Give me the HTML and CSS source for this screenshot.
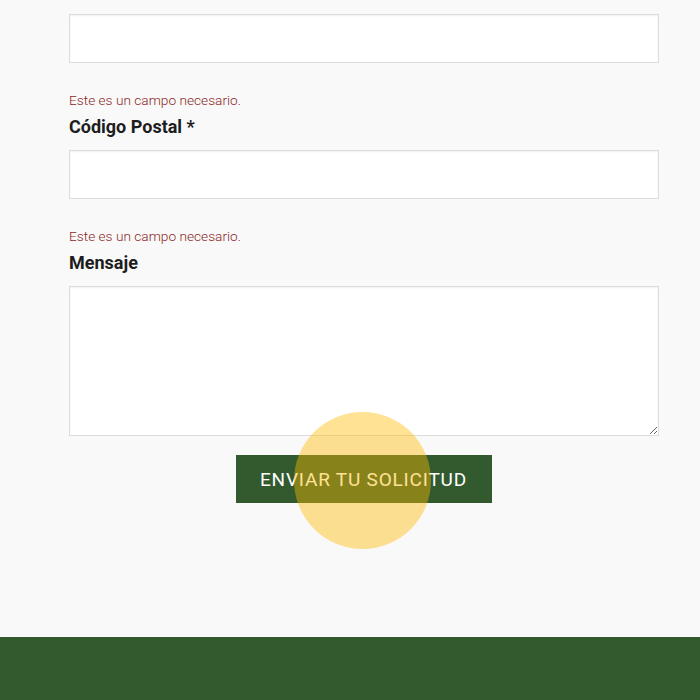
FILE: index.html
```html
<!DOCTYPE html>
<html lang="es">
<head>
<meta charset="utf-8">
<link rel="stylesheet" href="styles.css">
</head>
<body>
<main class="page">
  <form class="form">
    <input class="field" type="text">
    <p class="error">Este es un campo necesario.</p>
    <label class="label">Código Postal *</label>
    <input class="field" type="text">
    <p class="error">Este es un campo necesario.</p>
    <label class="label">Mensaje</label>
    <textarea class="field area"></textarea>
    <div class="actions">
      <div class="btn-wrap">
        <button class="btn" type="button">ENVIAR TU SOLICITUD</button>
        <span class="click"></span>
      </div>
    </div>
  </form>
</main>
<footer class="footer"></footer>
</body>
</html>
```

FILE: styles.css
```css
* { box-sizing: border-box; }
html, body { margin: 0; padding: 0; }
body {
  background: #f9f9f9;
  font-family: Roboto, "Liberation Sans", sans-serif;
  color: #1b1b1b;
}
.page {
  padding: 14px 0 0 69px;
  height: 637px;
}
.form {
  width: 590px;
  display: flex;
  flex-direction: column;
}
.field {
  display: block;
  width: 590px;
  height: 49px;
  margin: 0;
  background: #fff;
  border: 1px solid #dcdcdc;
  box-shadow: inset 0 1px 2px rgba(0,0,0,0.06);
  border-radius: 0;
  font-family: inherit;
  outline: none;
}
.area {
  height: 150px;
  resize: both;
}
.error {
  margin: 28px 0 0;
  font-size: 13.7px;
  line-height: 18px;
  font-weight: 300;
  color: #8a1f1f;
}
.label {
  display: block;
  margin: 6px 0 11px;
  font-size: 18px;
  line-height: 24px;
  font-weight: 700;
  color: #1d1d1d;
}
.actions {
  display: flex;
  justify-content: center;
  margin-top: 19px;
}
.btn-wrap {
  position: relative;
  margin-left: -1px;
}
.btn {
  display: block;
  width: 256px;
  height: 48px;
  border: 0;
  background: #335a2f;
  color: #fff;
  font-family: Roboto, "Liberation Sans", sans-serif;
  font-size: 19px;
  font-weight: 400;
  letter-spacing: 0.8px;
  padding: 0;
}
.click {
  position: absolute;
  left: 127px;
  top: 25px;
  width: 137px;
  height: 137px;
  margin: -68.5px 0 0 -68.5px;
  border-radius: 50%;
  background: rgba(255, 185, 0, 0.42);
  pointer-events: none;
}
.footer {
  height: 63px;
  background: #335a2f;
}
```
